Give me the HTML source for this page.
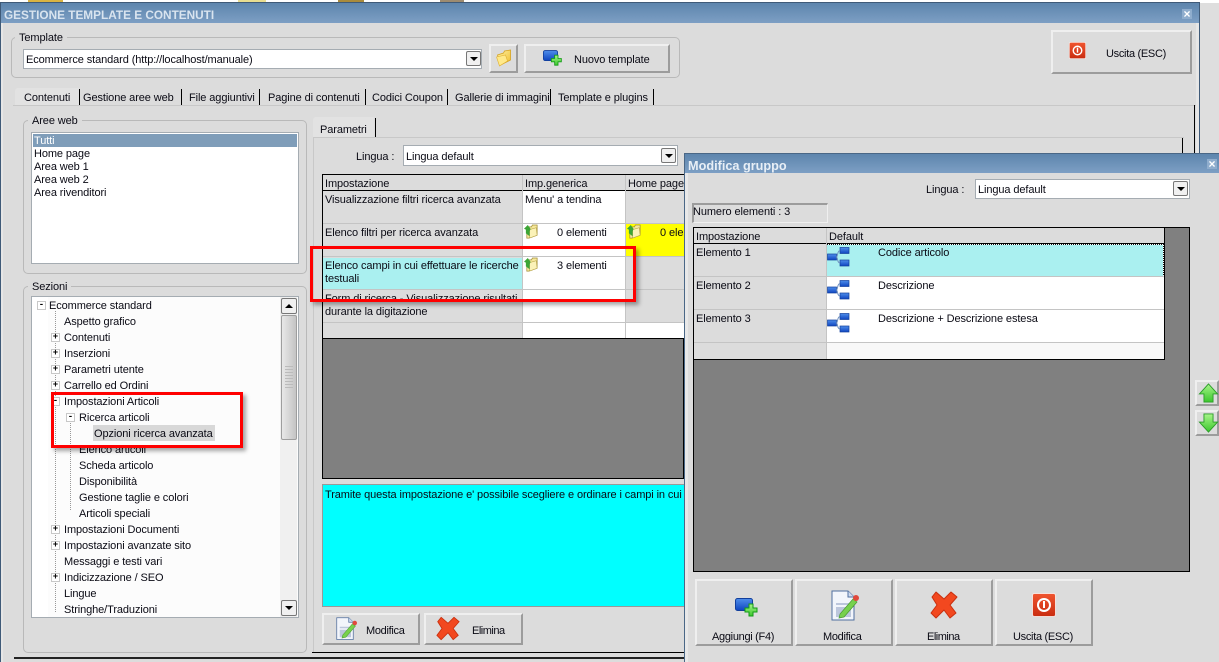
<!DOCTYPE html>
<html lang="it"><head><meta charset="utf-8"><title>Gestione template e contenuti</title>
<style>
html,body{margin:0;padding:0;width:1219px;height:662px;overflow:hidden;background:#dedede}
body{position:relative;font:11px/13px "Liberation Sans",sans-serif;color:#0a0a14}
.a,.t,svg.i{position:absolute}
.t{white-space:nowrap;margin-top:1px;letter-spacing:-.1px}
.n{letter-spacing:-.3px}
.b{position:absolute;box-sizing:border-box;background:#dcdcdc;border:2px solid;border-color:#efefef #9c9c9c #9c9c9c #efefef}
.g{position:absolute;box-sizing:border-box;border:1px solid #b9b9b9;border-radius:5px}
.l{position:absolute;background:#dcdcdc;padding:0 4px;white-space:nowrap;margin-top:1px;letter-spacing:-.1px}
.c{position:absolute;box-sizing:border-box;background:#fff;border:1px solid #a5acb2}
.d{position:absolute;box-sizing:border-box;width:15px;height:15px;background:#f0f0f0;border:1px solid #777;border-radius:2px}
.d:after{content:"";position:absolute;left:3px;top:5px;border:4px solid transparent;border-top:4px solid #000;border-bottom:0}
.d.u:after{border-top:0;border-bottom:4px solid #000}
.v{position:absolute;width:1px;background:#000}
.h{position:absolute;height:1px;background:#000}
.r{position:absolute;box-sizing:border-box;border:3px solid #f00;box-shadow:3px 3px 4px rgba(0,0,0,.35)}
.tt{position:absolute;background:linear-gradient(#5d85ad,#7d9fc4)}
.x{position:absolute;width:10px;height:10px;background:#8fadcd;color:#fff;font:bold 12px/10px "Liberation Sans",sans-serif;text-align:center}
.p{position:absolute;width:9px;height:9px;box-sizing:border-box;border:1px solid #c8c8c8;background:#fff;font:bold 9px/6px "Liberation Mono",monospace;text-align:center;color:#000}
.dv{position:absolute;border-left:1px dotted #999}
</style></head><body>
<svg width="0" height="0" style="position:absolute">
<defs>
<linearGradient id="rd" x1="0" y1="0" x2="0" y2="1"><stop offset="0" stop-color="#f0552f"/><stop offset="1" stop-color="#c92c10"/></linearGradient>
<linearGradient id="bl" x1="0" y1="0" x2="0" y2="1"><stop offset="0" stop-color="#4f8eea"/><stop offset="1" stop-color="#0f45c0"/></linearGradient>
<linearGradient id="gr" x1="0" y1="0" x2="0" y2="1"><stop offset="0" stop-color="#a8f58a"/><stop offset="1" stop-color="#3bc62c"/></linearGradient>
<linearGradient id="fo" x1="0" y1="0" x2="1" y2="1"><stop offset="0" stop-color="#fff3a8"/><stop offset="1" stop-color="#eebc2c"/></linearGradient>
<symbol id="power" viewBox="0 0 24 24"><rect x=".5" y=".5" width="23" height="23" rx="2" fill="url(#rd)" stroke="#fff" stroke-opacity=".7"/><circle cx="12" cy="12" r="6" fill="none" stroke="#fff" stroke-width="2"/><rect x="11" y="8" width="2" height="7" fill="#fff"/></symbol>
<symbol id="cross" viewBox="0 0 28 28"><path d="M6 1L14 8 21 1 27 6 20 14 26 22 20 27 14 19 6 27 1 22 7 14 2 6Z" fill="#f2481f" stroke="#c9300f" stroke-linejoin="round"/></symbol>
<symbol id="edit" viewBox="0 0 28 32"><path d="M1 1H17L23 7V30H1Z" fill="#f2f5fb" stroke="#51709f" stroke-width="1"/><path d="M17 1V7H23" fill="#cfdcf0" stroke="#51709f"/><rect x="5" y="13" width="15" height="2" fill="#bcc6dc"/><rect x="5" y="17" width="15" height="10" fill="#bcc6dc"/><path d="M9 24L22 9 26 12 13 27 8 28Z" fill="#77d14d" stroke="#4c9a33" stroke-width=".7"/><circle cx="25" cy="8" r="3" fill="#e0493c"/></symbol>
<symbol id="add" viewBox="0 0 24 20"><rect x=".5" y=".5" width="17" height="12" rx="2" fill="url(#bl)" stroke="#123f9c"/><path d="M13 5H17V9H21V13H17V17H13V13H9V9H13Z" transform="translate(1 1)" fill="url(#gr)" stroke="#119a14"/></symbol>
<symbol id="folder" viewBox="0 0 16 18"><path d="M2 6L8 4 9 2 15 1 15 11 5 16Z" fill="url(#fo)" stroke="#d6a31f" stroke-width=".8"/><path d="M1 8L10 6 12 12 4 17Z" fill="#ffe98a" stroke="#e0b030" stroke-width=".6"/></symbol>
<symbol id="gfolder" viewBox="0 0 16 16"><path d="M3 3H8L9 1H14V12L5 15H3Z" fill="#f6e89b" stroke="#a18e36" stroke-width=".8"/><path d="M6 6L13 4 14 12 6 15Z" fill="#fbf2b8" stroke="#b5a144" stroke-width=".6"/><path d="M4 1L0 5 2 6V10L6 13V8L7 5Z" fill="#3ca536"/></symbol>
<symbol id="tree" viewBox="0 0 23 20"><rect x="13" y=".5" width="9" height="6" fill="url(#bl)" stroke="#123f9c" stroke-width=".7"/><rect x="13" y="13" width="9" height="6" fill="url(#bl)" stroke="#123f9c" stroke-width=".7"/><rect x=".5" y="7" width="9" height="6" fill="url(#bl)" stroke="#123f9c" stroke-width=".7"/><path d="M13 3.500C10 4 11 9 9.500 10 11 11 10 16 13 16" fill="none" stroke="#6d8fc0"/></symbol>
<symbol id="up" viewBox="0 0 22 22"><path d="M11 1L21 12H16V21H6V12H1Z" fill="url(#gr)" stroke="#2a9c28"/></symbol>
<symbol id="down" viewBox="0 0 22 22"><path d="M11 21L21 10H16V1H6V10H1Z" fill="url(#gr)" stroke="#2a9c28"/></symbol>
</defs></svg>

<!-- strip above the window -->
<div class="a" style="left:0;top:0;width:1219px;height:3px;background:#fff"></div>
<div class="a" style="left:28px;top:0;width:35px;height:3px;background:#d9b342"></div>
<div class="a" style="left:238px;top:0;width:28px;height:3px;background:#e8dd90"></div>
<div class="a" style="left:338px;top:0;width:26px;height:3px;background:#a98b3c"></div>
<div class="a" style="left:440px;top:0;width:24px;height:3px;background:#9d8b70"></div>

<!-- main window -->
<div class="a" style="left:0;top:2px;width:1200px;height:660px;background:#3f5a78"></div>
<div class="a" style="left:1px;top:3px;width:1198px;height:659px;background:#e6e6e6"></div>
<div class="a" style="left:3px;top:23px;width:1193px;height:639px;background:#dcdcdc"></div>
<div class="tt" style="left:1px;top:3px;width:1198px;height:20px"></div>
<div class="t" style="left:4px;top:8px;color:#d9e4ef;font-weight:bold;font-size:11.800px;letter-spacing:0">GESTIONE TEMPLATE E CONTENUTI</div>
<div class="x" style="left:1182px;top:9px">×</div>

<div class="g" style="left:11px;top:37px;width:669px;height:41px"></div>
<div class="l" style="left:15px;top:31px">Template</div>
<div class="c" style="left:23px;top:49px;width:459px;height:20px"></div>
<div class="t" style="left:26px;top:53px">Ecommerce standard (http://localhost/manuale)</div>
<div class="d" style="left:466px;top:51px"></div>
<div class="b" style="left:489px;top:44px;width:29px;height:29px"></div>
<svg class="i" style="left:495px;top:49px" width="17" height="18"><use href="#folder"/></svg>
<div class="b" style="left:524px;top:44px;width:146px;height:29px"></div>
<svg class="i" style="left:543px;top:50px" width="20" height="17"><use href="#add"/></svg>
<div class="t" style="left:574px;top:53px">Nuovo template</div>
<div class="b" style="left:1051px;top:30px;width:141px;height:44px"></div>
<svg class="i" style="left:1069px;top:42px" width="17" height="17"><use href="#power"/></svg>
<div class="t n" style="left:1106px;top:47px">Uscita (ESC)</div>

<!-- tabs -->
<div class="a" style="left:15px;top:88px;width:64px;height:18px;background:#e2e2e2;border-radius:3px 0 0 0"></div>
<div class="a" style="left:13px;top:105px;width:1183px;height:1px;background:#c8c8c8"></div>
<div class="t" style="left:24px;top:91px">Contenuti</div>
<div class="t" style="left:83px;top:91px">Gestione aree web</div>
<div class="t" style="left:189px;top:91px">File aggiuntivi</div>
<div class="t" style="left:268px;top:91px">Pagine di contenuti</div>
<div class="t" style="left:372px;top:91px">Codici Coupon</div>
<div class="t" style="left:455px;top:91px">Gallerie di immagini</div>
<div class="t" style="left:558px;top:91px">Template e plugins</div>
<div class="v" style="left:79px;top:89px;height:16px"></div>
<div class="v" style="left:181px;top:89px;height:16px"></div>
<div class="v" style="left:259px;top:89px;height:16px"></div>
<div class="v" style="left:365px;top:89px;height:16px"></div>
<div class="v" style="left:447px;top:89px;height:16px"></div>
<div class="v" style="left:550px;top:89px;height:16px"></div>
<div class="v" style="left:653px;top:89px;height:16px"></div>
<div class="v" style="left:1194px;top:105px;height:48px"></div>
<div class="v" style="left:1182px;top:137px;height:16px"></div>

<!-- aree web -->
<div class="g" style="left:23px;top:120px;width:284px;height:154px"></div>
<div class="l" style="left:28px;top:114px">Aree web</div>
<div class="c" style="left:31px;top:132px;width:268px;height:132px"></div>
<div class="a" style="left:33px;top:134px;width:264px;height:13px;background:#7f9db9"></div>
<div class="t" style="left:34px;top:134px;color:#fff">Tutti</div>
<div class="t" style="left:34px;top:147px">Home page</div>
<div class="t" style="left:34px;top:160px">Area web 1</div>
<div class="t" style="left:34px;top:173px">Area web 2</div>
<div class="t" style="left:34px;top:186px">Area rivenditori</div>

<!-- sezioni -->
<div class="g" style="left:23px;top:286px;width:284px;height:367px"></div>
<div class="l" style="left:28px;top:280px">Sezioni</div>
<div class="c" style="left:31px;top:296px;width:268px;height:322px;background:#fcfcfc"></div>
<div class="a" style="left:32px;top:297px;width:16px;height:320px;background:#fff"></div>
<div class="a" style="left:280px;top:297px;width:17px;height:320px;background:#f0f0f0"></div>
<div class="d u" style="left:281px;top:298px;width:16px;height:16px"></div>
<div class="a" style="left:281px;top:315px;width:16px;height:125px;box-sizing:border-box;background:linear-gradient(90deg,#e8e8e8,#c4c4c4);border:1px solid #9e9e9e;border-radius:2px"></div>
<div class="a" style="left:285px;top:366px;width:8px;height:22px;background:repeating-linear-gradient(#bbb 0 1px,transparent 1px 3px)"></div>
<div class="d" style="left:281px;top:600px;width:16px;height:16px"></div>

<div class="dv" style="left:55px;top:311px;height:301px"></div>
<div class="dv" style="left:70px;top:423px;height:87px"></div>
<div class="p" style="left:37px;top:301px">-</div>
<div class="t" style="left:49px;top:299px">Ecommerce standard</div>
<div class="t" style="left:64px;top:315px">Aspetto grafico</div>
<div class="p" style="left:51px;top:333px">+</div><div class="t" style="left:64px;top:331px">Contenuti</div>
<div class="p" style="left:51px;top:349px">+</div><div class="t" style="left:64px;top:347px">Inserzioni</div>
<div class="p" style="left:51px;top:365px">+</div><div class="t" style="left:64px;top:363px">Parametri utente</div>
<div class="p" style="left:51px;top:381px">+</div><div class="t" style="left:64px;top:379px">Carrello ed Ordini</div>
<div class="p" style="left:51px;top:397px">-</div><div class="t" style="left:64px;top:395px">Impostazioni Articoli</div>
<div class="p" style="left:66px;top:413px">-</div><div class="t" style="left:79px;top:411px">Ricerca articoli</div>
<div class="a" style="left:93px;top:425px;width:122px;height:16px;background:#d8d8d8"></div>
<div class="t" style="left:94px;top:427px">Opzioni ricerca avanzata</div>
<div class="t" style="left:79px;top:443px">Elenco articoli</div>
<div class="t" style="left:79px;top:459px">Scheda articolo</div>
<div class="t" style="left:79px;top:475px">Disponibilità</div>
<div class="t" style="left:79px;top:491px">Gestione taglie e colori</div>
<div class="t" style="left:79px;top:507px">Articoli speciali</div>
<div class="p" style="left:51px;top:525px">+</div><div class="t" style="left:64px;top:523px">Impostazioni Documenti</div>
<div class="p" style="left:51px;top:541px">+</div><div class="t" style="left:64px;top:539px">Impostazioni avanzate sito</div>
<div class="t" style="left:64px;top:555px">Messaggi e testi vari</div>
<div class="p" style="left:51px;top:573px">+</div><div class="t" style="left:64px;top:571px">Indicizzazione / SEO</div>
<div class="t" style="left:64px;top:587px">Lingue</div>
<div class="t" style="left:64px;top:603px">Stringhe/Traduzioni</div>

<!-- parametri -->
<div class="a" style="left:313px;top:137px;width:871px;height:1px;background:#c8c8c8"></div>
<div class="a" style="left:313px;top:137px;width:1px;height:516px;background:#c8c8c8"></div>
<div class="a" style="left:313px;top:117px;width:61px;height:20px;background:#e2e2e2;border-radius:3px 0 0 0"></div>
<div class="v" style="left:375px;top:118px;height:19px"></div>
<div class="t" style="left:320px;top:123px">Parametri</div>
<div class="t" style="left:356px;top:150px">Lingua :</div>
<div class="c" style="left:403px;top:145px;width:275px;height:21px"></div>
<div class="t" style="left:406px;top:150px">Lingua default</div>
<div class="d" style="left:661px;top:148px"></div>

<!-- main grid -->
<div class="a" style="left:322px;top:174px;width:362px;height:305px;background:#808080;border:1px solid #000;box-sizing:border-box"></div>
<div class="a" style="left:323px;top:175px;width:361px;height:164px;background:#dcdcdc"></div>
<div class="a" style="left:523px;top:191px;width:102px;height:147px;background:#fff"></div>
<div class="a" style="left:626px;top:191px;width:58px;height:147px;background:#fff"></div>
<div class="a" style="left:626px;top:224px;width:58px;height:32px;background:#ff0"></div>
<div class="a" style="left:323px;top:258px;width:199px;height:31px;background:#aaf0f0"></div>
<div class="a" style="left:626px;top:257px;width:58px;height:65px;background:#dcdcdc"></div>
<div class="a" style="left:626px;top:191px;width:58px;height:32px;background:#dcdcdc"></div>
<div class="h" style="left:323px;top:190px;width:361px"></div>
<div class="h" style="left:322px;top:338px;width:362px"></div>
<div class="a" style="left:522px;top:175px;width:1px;height:163px;background:#c4c4c4"></div>
<div class="a" style="left:625px;top:175px;width:1px;height:163px;background:#c4c4c4"></div>
<div class="a" style="left:323px;top:223px;width:361px;height:1px;background:#c4c4c4"></div>
<div class="a" style="left:323px;top:256px;width:361px;height:1px;background:#c4c4c4"></div>
<div class="a" style="left:323px;top:289px;width:361px;height:1px;background:#c4c4c4"></div>
<div class="a" style="left:323px;top:322px;width:361px;height:1px;background:#c4c4c4"></div>
<div class="t" style="left:325px;top:177px">Impostazione</div>
<div class="t" style="left:525px;top:177px">Imp.generica</div>
<div class="t" style="left:628px;top:177px">Home page</div>
<div class="t" style="left:325px;top:193px">Visualizzazione filtri ricerca avanzata</div>
<div class="t" style="left:525px;top:193px">Menu' a tendina</div>
<div class="t" style="left:325px;top:226px">Elenco filtri per ricerca avanzata</div>
<svg class="i" style="left:524px;top:224px" width="15" height="15"><use href="#gfolder"/></svg>
<div class="t" style="left:557px;top:226px">0 elementi</div>
<svg class="i" style="left:627px;top:224px" width="15" height="15"><use href="#gfolder"/></svg>
<div class="t" style="left:660px;top:226px;width:24px;overflow:hidden">0 elementi</div>
<div class="t" style="left:325px;top:259px">Elenco campi in cui effettuare le ricerche<br>testuali</div>
<svg class="i" style="left:524px;top:257px" width="15" height="15"><use href="#gfolder"/></svg>
<div class="t" style="left:557px;top:259px">3 elementi</div>
<div class="t" style="left:325px;top:292px">Form di ricerca - Visualizzazione risultati</div>
<div class="t" style="left:325px;top:305px">durante la digitazione</div>

<!-- info box -->
<div class="a" style="left:322px;top:484px;width:362px;height:123px;box-sizing:border-box;background:#0ff;border:1px solid #999;border-right:0"></div>
<div class="t" style="left:325px;top:488px;width:358px;overflow:hidden">Tramite questa impostazione e' possibile scegliere e ordinare i campi in cui effettuare le ricerche testuali</div>
<div class="b" style="left:322px;top:613px;width:98px;height:32px"></div>
<svg class="i" style="left:336px;top:617px" width="21" height="24"><use href="#edit"/></svg>
<div class="t n" style="left:366px;top:624px">Modifica</div>
<div class="b" style="left:424px;top:613px;width:99px;height:32px"></div>
<svg class="i" style="left:436px;top:616px" width="24" height="25"><use href="#cross"/></svg>
<div class="t n" style="left:472px;top:624px;letter-spacing:-.5px">Elimina</div>
<div class="h" style="left:312px;top:652px;width:372px"></div>
<div class="h" style="left:14px;top:657px;width:670px;height:2px;background:#222"></div>

<!-- dialog -->
<div class="a" style="left:684px;top:153px;width:535px;height:509px;background:#e8e8e8;border-left:1px solid #4a6786;border-top:1px solid #4a6786;box-sizing:border-box"></div>
<div class="a" style="left:688px;top:173px;width:531px;height:489px;background:#dcdcdc"></div>
<div class="tt" style="left:685px;top:154px;width:534px;height:19px"></div>
<div class="t" style="left:688px;top:159px;color:#e8eff6;font-weight:bold;font-size:12.700px;letter-spacing:0">Modifica gruppo</div>
<div class="x" style="left:1207px;top:159px">×</div>
<div class="t" style="left:926px;top:183px">Lingua :</div>
<div class="c" style="left:975px;top:179px;width:215px;height:20px"></div>
<div class="t" style="left:978px;top:183px">Lingua default</div>
<div class="d" style="left:1173px;top:181px"></div>
<div class="a" style="left:692px;top:203px;width:136px;height:20px;box-sizing:border-box;border:1px solid;border-color:#9c9c9c #efefef #efefef #9c9c9c;border-width:2px 1px 1px 2px"></div>
<div class="t" style="left:693px;top:205px">Numero elementi : 3</div>

<div class="a" style="left:693px;top:227px;width:497px;height:345px;box-sizing:border-box;background:#808080;border:1px solid #000"></div>
<div class="a" style="left:694px;top:228px;width:470px;height:131px;background:#fff"></div>
<div class="a" style="left:694px;top:228px;width:470px;height:15px;background:#dcdcdc"></div>
<div class="a" style="left:694px;top:244px;width:132px;height:115px;background:#dcdcdc"></div>
<div class="a" style="left:827px;top:245px;width:336px;height:31px;background:#aaf0f0;outline:1px dotted #111;outline-offset:0"></div>
<div class="a" style="left:827px;top:343px;width:337px;height:16px;background:#f8f8f8"></div>
<div class="h" style="left:694px;top:243px;width:470px"></div>
<div class="h" style="left:694px;top:359px;width:471px"></div>
<div class="v" style="left:1164px;top:228px;height:132px"></div>
<div class="a" style="left:826px;top:228px;width:1px;height:131px;background:#c4c4c4"></div>
<div class="a" style="left:694px;top:276px;width:470px;height:1px;background:#c4c4c4"></div>
<div class="a" style="left:694px;top:309px;width:470px;height:1px;background:#c4c4c4"></div>
<div class="a" style="left:694px;top:342px;width:470px;height:1px;background:#c4c4c4"></div>
<div class="t" style="left:696px;top:230px">Impostazione</div>
<div class="t" style="left:829px;top:230px">Default</div>
<div class="t" style="left:696px;top:246px">Elemento 1</div>
<div class="t" style="left:696px;top:279px">Elemento 2</div>
<div class="t" style="left:696px;top:312px">Elemento 3</div>
<svg class="i" style="left:827px;top:247px" width="23" height="20"><use href="#tree"/></svg>
<svg class="i" style="left:827px;top:280px" width="23" height="20"><use href="#tree"/></svg>
<svg class="i" style="left:827px;top:313px" width="23" height="20"><use href="#tree"/></svg>
<div class="t" style="left:878px;top:246px">Codice articolo</div>
<div class="t" style="left:878px;top:279px">Descrizione</div>
<div class="t" style="left:878px;top:312px">Descrizione + Descrizione estesa</div>

<div class="b" style="left:1195px;top:380px;width:24px;height:26px"></div>
<svg class="i" style="left:1198px;top:383px" width="21" height="20"><use href="#up"/></svg>
<div class="b" style="left:1195px;top:410px;width:24px;height:26px"></div>
<svg class="i" style="left:1198px;top:413px" width="21" height="20"><use href="#down"/></svg>

<div class="b" style="left:695px;top:579px;width:98px;height:67px"></div>
<svg class="i" style="left:735px;top:598px" width="24" height="20"><use href="#add"/></svg>
<div class="t n" style="left:712px;top:630px">Aggiungi (F4)</div>
<div class="b" style="left:795px;top:579px;width:98px;height:67px"></div>
<svg class="i" style="left:831px;top:590px" width="28" height="32"><use href="#edit"/></svg>
<div class="t n" style="left:823px;top:630px">Modifica</div>
<div class="b" style="left:895px;top:579px;width:98px;height:67px"></div>
<svg class="i" style="left:930px;top:591px" width="28" height="28"><use href="#cross"/></svg>
<div class="t n" style="left:927px;top:630px;letter-spacing:-.5px">Elimina</div>
<div class="b" style="left:995px;top:579px;width:98px;height:67px"></div>
<svg class="i" style="left:1032px;top:593px" width="24" height="24"><use href="#power"/></svg>
<div class="t n" style="left:1013px;top:630px">Uscita (ESC)</div>

<!-- annotations -->
<div class="r" style="left:51px;top:392px;width:192px;height:56px"></div>
<div class="r" style="left:310px;top:246px;width:326px;height:56px"></div>
</body></html>
